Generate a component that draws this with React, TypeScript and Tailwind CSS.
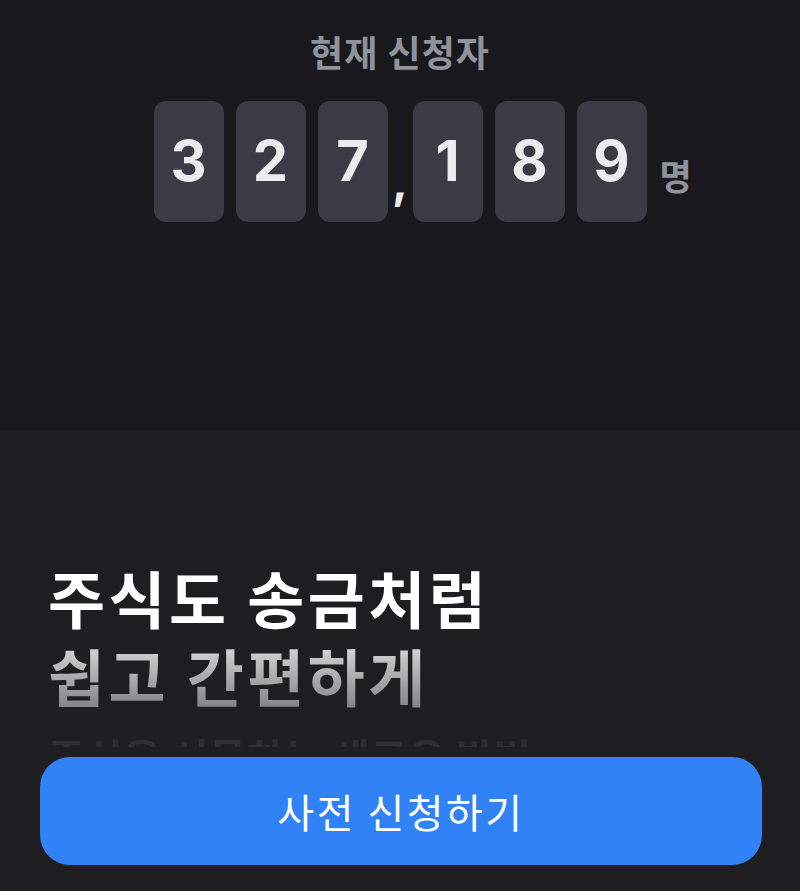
import React from 'react';

const KR = { fontFamily: '"Noto Sans CJK KR", "Noto Sans", sans-serif' };
const NUM = { fontFamily: 'Inter, "Noto Sans CJK KR", sans-serif' };

const DigitCard: React.FC<{ value: string }> = ({ value }) => (
  <div
    className="w-[70px] h-[121px] rounded-[12px] bg-[#3b3b45] flex items-center justify-center text-[56px] font-bold text-[#ececee] leading-none"
    style={NUM}
  >
    {value}
  </div>
);

const App: React.FC = () => {
  const count = '327189';
  const head = count.slice(0, 3).split('');
  const tail = count.slice(3).split('');

  return (
    <div className="relative w-full h-[891px] overflow-hidden bg-[#1e1e20]" style={KR}>
      {/* Counter */}
      <section className="h-[430px] bg-[#18181d] flex flex-col items-center pt-[28px]">
        <h2 className="text-[36px] font-bold text-[#8e939c] leading-[1.3] tracking-[1px]">현재 신청자</h2>
        <div className="relative flex items-start mt-[26px]">
          <div className="flex gap-3">
            {head.map((d, i) => (
              <DigitCard key={i} value={d} />
            ))}
          </div>
          <span
            className="w-[25px] h-[121px] flex items-end justify-center pb-[17px] text-[48px] font-bold text-[#ececee] leading-none"
            style={NUM}
          >
            ,
          </span>
          <div className="flex gap-3">
            {tail.map((d, i) => (
              <DigitCard key={i} value={d} />
            ))}
          </div>
          <span className="absolute left-full top-[56px] ml-[13px] text-[35px] font-bold text-[#8e939c] leading-none">
            명
          </span>
        </div>
      </section>

      {/* Headline */}
      <section className="px-12 pt-[128px]">
        <h1 className="text-[62px] font-bold leading-[78px] tracking-[3.5px]">
          <span className="block text-white">주식도 송금처럼</span>
          <span className="block bg-gradient-to-b from-[#e4e4e4] to-[#7c7c7e] bg-clip-text text-transparent">
            쉽고 간편하게
          </span>
        </h1>
        <p className="mt-[16px] text-[40px] font-bold text-[#2e2e33] leading-[1.3] tracking-[1px]">
          주식을 선물하는 새로운 방법
        </p>
      </section>

      {/* CTA */}
      <div className="absolute inset-x-0 bottom-0 pl-10 pr-[38px] pb-[26px] pt-[10px] bg-[#1e1e20]">
        <button className="w-full h-[108px] rounded-[30px] bg-[#3182f6] text-white text-[40px] font-normal tracking-[2.5px]">
          사전 신청하기
        </button>
      </div>
    </div>
  );
};

export default App;
